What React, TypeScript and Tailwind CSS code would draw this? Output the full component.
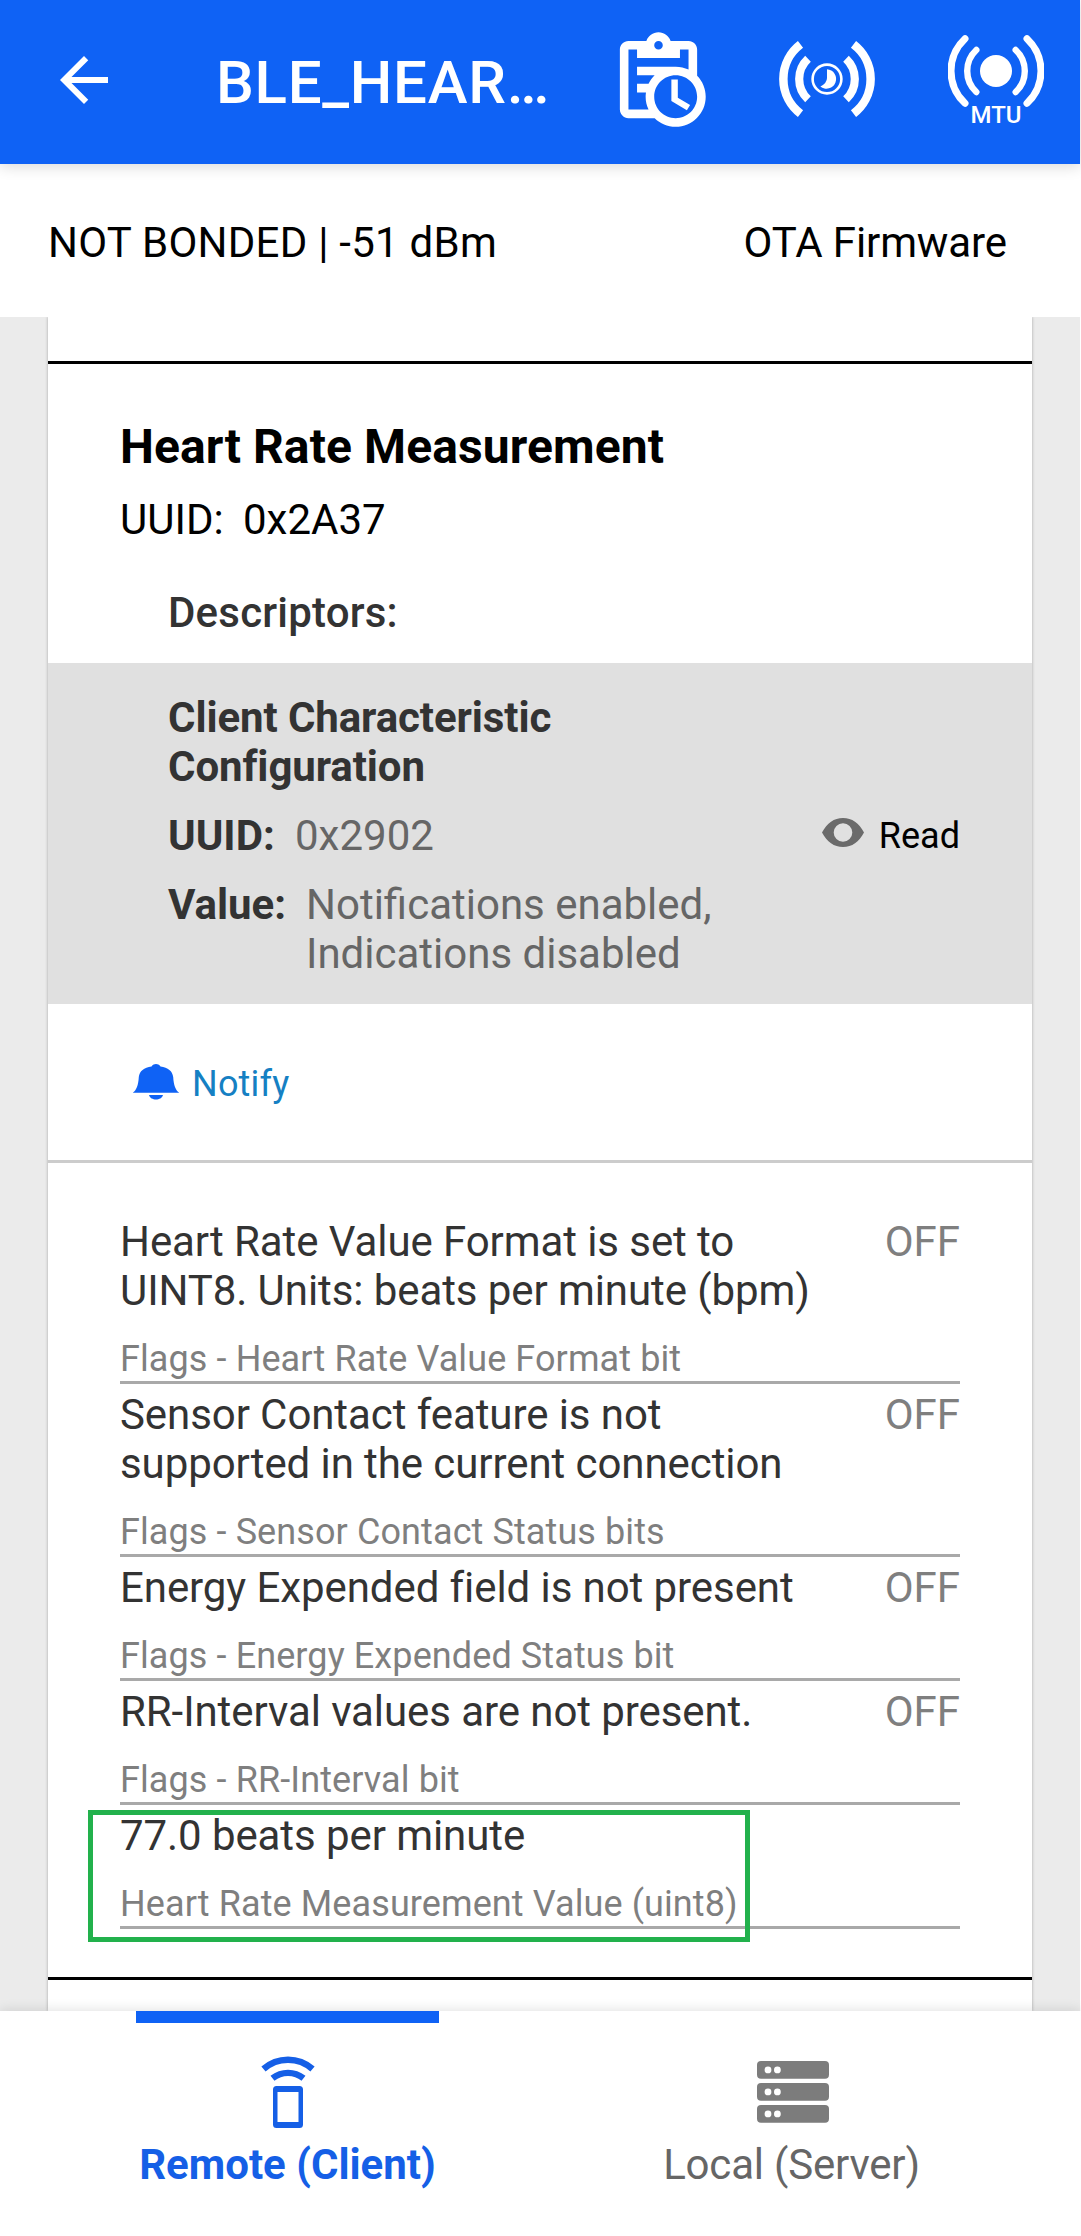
import React from "react";

function TaskLogIcon() {
  return (
    <svg className="h-[103px] w-[103px] shrink-0" viewBox="0 0 24 24" fill="white">
      <path d="M21 11.11V5C21 3.9 20.11 3 19 3H14.82C14.4 1.84 13.3 1 12 1S9.6 1.84 9.18 3H5C3.9 3 3 3.9 3 5V19C3 20.11 3.9 21 5 21H11.11C12.37 22.24 14.09 23 16 23C19.87 23 23 19.87 23 16C23 14.09 22.24 12.37 21 11.11M12 3C12.55 3 13 3.45 13 4S12.55 5 12 5 11 4.55 11 4 11.45 3 12 3M5 19V5H7V7H17V5H19V9.68C18.09 9.25 17.08 9 16 9H7V11H11.1C10.5 11.57 10.04 12.25 9.68 13H7V15H9.08C9.03 15.33 9 15.66 9 16C9 17.08 9.25 18.09 9.68 19H5M16 21C13.24 21 11 18.76 11 16S13.24 11 16 11 21 13.24 21 16 18.76 21 16 21M16.5 16.25L19.36 17.94L18.61 19.16L15 17V12H16.5V16.25Z" />
    </svg>
  );
}

function IntervalIcon() {
  return (
    <svg className="mt-[3px] ml-[69px] h-[96px] w-[96px] shrink-0" viewBox="-48 -48 96 96" fill="none" stroke="white">
      <path d="M-26.5 -34.6A43.5 43.5 0 0 0 -26.5 34.6M26.5 -34.6A43.5 43.5 0 0 1 26.5 34.6" strokeWidth="8.5" />
      <path d="M-19 -20.3A27.8 27.8 0 0 0 -19 20.3M19 -20.3A27.8 27.8 0 0 1 19 20.3" strokeWidth="8.2" />
      <circle r="14.4" strokeWidth="2.6" />
      <path d="M0 -9.7A9.7 9.7 0 1 1 -6.6 7.6Q0 4 0 -1Z" fill="white" stroke="none" />
    </svg>
  );
}

function MtuIcon() {
  return (
    <div className="mt-[6px] ml-[73px] flex w-[96px] shrink-0 flex-col items-center">
      <svg className="h-[74px] w-[96px]" viewBox="-48 -37 96 74" fill="none" stroke="white" strokeLinecap="round">
        <path d="M-31 -32.3A44.3 44.3 0 0 0 -31 32.3M31 -32.3A44.3 44.3 0 0 1 31 32.3" strokeWidth="7" />
        <path d="M-19.7 -21A28.8 28.8 0 0 0 -19.7 21M19.7 -21A28.8 28.8 0 0 1 19.7 21" strokeWidth="6.4" />
        <circle r="16" fill="white" stroke="none" />
      </svg>
      <span className="mt-[-7px] text-[24px] leading-[28px] font-medium">MTU</span>
    </div>
  );
}

function Header() {
  return (
    <header className="relative z-10 flex h-[164px] w-[1080px] shrink-0 items-start bg-[#0f62f5] text-white shadow-[0_2px_14px_rgba(0,0,0,0.16)]">
      <svg className="mt-[44px] ml-[48px] h-[72px] w-[72px] shrink-0" viewBox="0 0 24 24" fill="white">
        <path d="M20 11H7.83l5.59-5.59L12 4l-8 8 8 8 1.41-1.41L7.83 13H20v-2z" />
      </svg>
      <h1 className="mt-[47px] ml-[96px] w-[391px] text-[60px] leading-[71px] font-medium tracking-[0.7px] whitespace-nowrap">BLE_HEAR…</h1>
      <div className="mt-[28px] flex items-start">
        <TaskLogIcon />
        <IntervalIcon />
        <MtuIcon />
      </div>
    </header>
  );
}

const measurements = [
  { value: "Heart Rate Value Format is set to UINT8. Units: beats per minute (bpm)", label: "Flags - Heart Rate Value Format bit", state: "OFF" },
  { value: "Sensor Contact feature is not supported in the current connection", label: "Flags - Sensor Contact Status bits", state: "OFF" },
  { value: "Energy Expended field is not present", label: "Flags - Energy Expended Status bit", state: "OFF" },
  { value: "RR-Interval values are not present.", label: "Flags - RR-Interval bit", state: "OFF" },
  { value: "77.0 beats per minute", label: "Heart Rate Measurement Value (uint8)", state: "", highlighted: true },
];

function Measurement({ item }: { item: (typeof measurements)[number] }) {
  return (
    <div className="relative border-b-3 border-[#a9a9a9] pt-[6px] pb-px">
      <div className="flex justify-between">
        <p className="w-[720px] tracking-[-0.08px] text-[#333]">{item.value}</p>
        <span className="text-[#7f7f7f]">{item.state}</span>
      </div>
      <p className="mt-[23px] text-[36px] leading-[42px] tracking-[0.1px] text-[#7f7f7f]">{item.label}</p>
      {item.highlighted && (
        <div className="absolute top-[5px] left-[-32px] h-[132px] w-[662px] border-5 border-[#22b14c]" />
      )}
    </div>
  );
}

function Descriptor() {
  return (
    <div className="mt-[26px] flex h-[341px] justify-between bg-[#e0e0e0] pt-[30px] pr-[72px] pl-[120px]">
      <div className="text-[#666]">
        <p className="w-[440px] font-bold tracking-[-0.1px] text-[#333]">Client Characteristic Configuration</p>
        <p className="mt-[20px] flex">
          <b className="w-[127px] text-[#333]">UUID:</b>0x2902
        </p>
        <div className="mt-[20px] flex">
          <b className="w-[138px] text-[#333]">Value:</b>
          <p className="w-[440px]">Notifications enabled, Indications disabled</p>
        </div>
      </div>
      <div className="mt-[122px] flex items-start text-[36px] leading-[42px]">
        <svg className="mt-[2px] mr-[15px] h-[32px] w-[42px]" viewBox="0 0 42 32" fill="#6b6b6b" fillRule="evenodd">
          <path d="M0 15.5C5 6 12 1 21 1S37 6 42 15.5C37 25 30 30 21 30S5 25 0 15.5ZM21 6.2A9.3 9.3 0 1 0 21 24.8A9.3 9.3 0 1 0 21 6.2Z" />
        </svg>
        Read
      </div>
    </div>
  );
}

function BottomNav() {
  return (
    <nav className="relative z-10 flex h-[225px] shrink-0 bg-white shadow-[0_0_12px_rgba(0,0,0,0.14)]">
      <div className="ml-[136px] flex w-[303px] flex-col items-center border-t-12 border-[#0f62f5] font-bold whitespace-nowrap text-[#155fe6]">
        <svg className="mt-[33px] h-[72px] w-[54px]" viewBox="0 0 54 72" fill="none" stroke="currentColor">
          <path d="M2.5 13A37 37 0 0 1 51.5 13" strokeWidth="6.4" />
          <path d="M11.5 22.3A25 25 0 0 1 42.5 22.3" strokeWidth="6.4" />
          <path fill="currentColor" stroke="none" fillRule="evenodd" d="M15.500 30H38.500Q42 30 42 33.500V68.500Q42 72 38.500 72H15.500Q12 72 12 68.500V33.500Q12 30 15.500 30ZM16.500 36V66H37.500V36Z" />
        </svg>
        <span className="mt-[12px]">Remote (Client)</span>
      </div>
      <div className="ml-[202px] flex w-[301px] flex-col items-center whitespace-nowrap text-[#666]">
        <svg className="mt-[50px] ml-[2px] h-[62px] w-[72px]" viewBox="0 0 72 62" fill="#7c7c7c">
          {[0, 22, 44].map((y) => (
            <g key={y}>
              <rect y={y} width="72" height="17.8" rx="4" />
              <circle cx="11" cy={y + 8.9} r="3.4" fill="white" />
              <circle cx="20.4" cy={y + 8.9} r="3.4" fill="white" />
            </g>
          ))}
        </svg>
        <span className="mt-[17px] tracking-[-0.2px]">Local (Server)</span>
      </div>
    </nav>
  );
}

export default function App() {
  return (
    <div className="flex h-[2236px] w-[1081px] flex-col overflow-hidden bg-white font-['Roboto',sans-serif] text-[42px] leading-[49px] text-black">
      <Header />
      <div className="flex h-[153px] w-[1080px] shrink-0 justify-between bg-white pt-[54px] pr-[73px] pl-[48px]">
        <span className="tracking-[0.25px]">NOT BONDED | -51 dBm</span>
        <span className="tracking-[-0.1px]">OTA Firmware</span>
      </div>
      <main className="h-[1694px] w-[1080px] shrink-0 overflow-hidden bg-[#ebebeb] px-[48px]">
        <section className="h-[1694px] bg-white pt-[44px] shadow-[0_0_3px_rgba(0,0,0,0.3)]">
          <div className="border-t-3 border-black pt-[54px]">
            <h2 className="pl-[72px] text-[48px] leading-[57px] font-bold tracking-[0.1px]">Heart Rate Measurement</h2>
            <p className="mt-[20px] flex pl-[72px]">
              <span className="w-[123px]">UUID:</span>0x2A37
            </p>
            <p className="mt-[44px] pl-[120px] font-medium tracking-[0.2px] text-[#333]">Descriptors:</p>
          </div>
          <Descriptor />
          <div className="flex h-[159px] items-start border-b-3 border-[#ccc] pt-[59px] pl-[84px] text-[36px] leading-[42px] text-[#1580c3]">
            <svg className="mt-px h-[36px] w-[48px]" viewBox="0 0 48 36" fill="#0f62f5">
              <path d="M.7 28.7C4.5 26.5 6.3 21 6.8 13C7.5 7 12 3.4 19.5 2.4C22 -.7 26 -.7 28.5 2.4C36 3.4 40.5 7 41.2 13C41.7 21 43.5 26.5 47.3 28.7ZM17 31H31C29.5 37 18.5 37 17 31Z" />
            </svg>
            <span className="ml-[12px] tracking-[0.2px]">Notify</span>
          </div>
          <div className="border-b-3 border-black px-[72px] pt-[48px] pb-[48px]">
            {measurements.map((item) => (
              <Measurement key={item.label} item={item} />
            ))}
          </div>
        </section>
      </main>
      <BottomNav />
    </div>
  );
}
